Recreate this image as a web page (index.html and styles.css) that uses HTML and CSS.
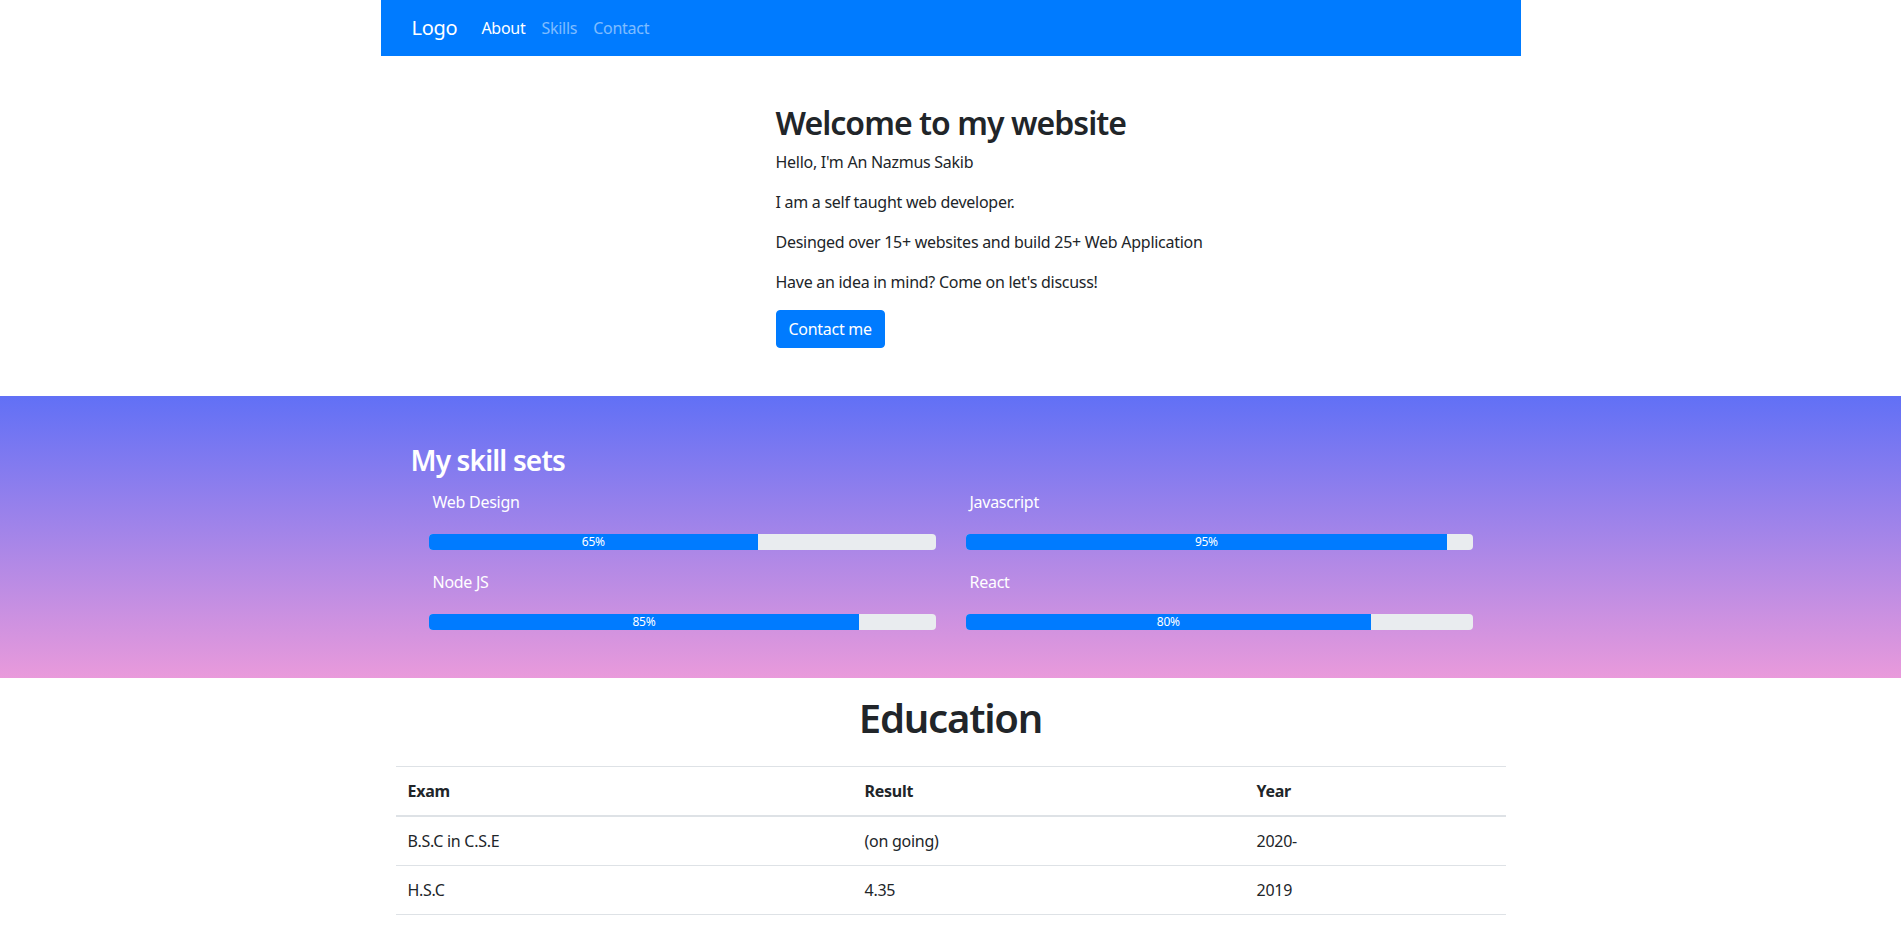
FILE: index.html
```html
<!DOCTYPE html>
<html lang="en">
<head>
<meta charset="utf-8">
<title>My website</title>
<link rel="stylesheet" href="styles.css">
</head>
<body>
<nav class="navbar">
  <a class="brand" href="#">Logo</a>
  <ul class="nav-links">
    <li><a class="nav-link active" href="#">About</a></li>
    <li><a class="nav-link" href="#">Skills</a></li>
    <li><a class="nav-link" href="#">Contact</a></li>
  </ul>
</nav>

<section class="hero">
  <div class="hero-row">
    <div class="hero-text">
      <h2 class="hero-title">Welcome to my website</h2>
      <p>Hello, I'm An Nazmus Sakib</p>
      <p>I am a self taught web developer.</p>
      <p>Desinged over 15+ websites and build 25+ Web Application</p>
      <p>Have an idea in mind? Come on let's discuss!</p>
      <a class="btn" href="#">Contact me</a>
    </div>
  </div>
</section>

<section class="skills">
  <div class="skills-inner">
    <h3 class="skills-title">My skill sets</h3>
    <div class="skills-grid">
      <div class="skill">
        <div class="skill-label">Web Design</div>
        <div class="progress"><div class="progress-bar" style="width:65%">65%</div></div>
      </div>
      <div class="skill">
        <div class="skill-label">Javascript</div>
        <div class="progress"><div class="progress-bar" style="width:95%">95%</div></div>
      </div>
      <div class="skill">
        <div class="skill-label">Node JS</div>
        <div class="progress"><div class="progress-bar" style="width:85%">85%</div></div>
      </div>
      <div class="skill">
        <div class="skill-label">React</div>
        <div class="progress"><div class="progress-bar" style="width:80%">80%</div></div>
      </div>
    </div>
  </div>
</section>

<section class="education">
  <h1 class="edu-title">Education</h1>
  <table class="table">
    <thead>
      <tr><th class="col-exam">Exam</th><th class="col-result">Result</th><th>Year</th></tr>
    </thead>
    <tbody>
      <tr><td>B.S.C in C.S.E</td><td>(on going)</td><td>2020-</td></tr>
      <tr><td>H.S.C</td><td>4.35</td><td>2019</td></tr>
    </tbody>
  </table>
</section>
</body>
</html>
```

FILE: styles.css
```css
* { box-sizing: border-box; }
html, body { margin: 0; padding: 0; }
body {
  font-family: "Noto Sans", "Open Sans", sans-serif;
  font-size: 16px;
  line-height: 1.5;
  letter-spacing: -0.017em;
  color: #212529;
  background: #fff;
}
h1, h2, h3 { margin: 0 0 8px; font-weight: 600; line-height: 1.2; letter-spacing: -0.03em; }
p { margin: 0 0 16px; }
a { text-decoration: none; }

.navbar {
  width: 1140px;
  margin: 0 auto;
  background: #007bff;
  padding: 8px 31px;
  display: flex;
  align-items: center;
}
.brand {
  color: #fff;
  font-size: 20px;
  line-height: 30px;
  padding: 5px 0;
  margin-right: 16px;
}
.nav-links { display: flex; list-style: none; margin: 0; padding: 0; }
.nav-link {
  display: block;
  padding: 8px;
  color: rgba(255,255,255,.5);
}
.nav-link.active { color: #fff; }

.hero {
  width: 1140px;
  margin: 0 auto;
  padding: 48px 15px;
}
.hero-row {
  display: grid;
  grid-template-columns: repeat(12, 1fr);
  column-gap: 30px;
}
.hero-text { grid-column: 5 / span 6; }
.hero-title { font-size: 32px; }
.btn {
  display: inline-block;
  background: #007bff;
  color: #fff;
  border: 1px solid #007bff;
  border-radius: 4px;
  padding: 6px 12px;
  font-size: 16px;
  line-height: 24px;
}

.skills {
  background: linear-gradient(to bottom, #6170f6, #e99adb);
  color: #fff;
}
.skills-inner {
  width: 1140px;
  margin: 0 auto;
  padding: 48px 30px;
}
.skills-title { font-size: 28px; }
.skills-grid {
  display: grid;
  grid-template-columns: 1fr 1fr;
  column-gap: 30px;
  row-gap: 16px;
  padding: 0 18px;
}
.skill-label { padding: 4px; margin-bottom: 16px; }
.progress {
  height: 16px;
  display: flex;
  background: #e9ecef;
  border-radius: 4px;
  overflow: hidden;
  font-size: 12px;
  line-height: 16px;
}
.progress-bar {
  background: #007bff;
  color: #fff;
  text-align: center;
}

.education {
  width: 1140px;
  margin: 0 auto;
  padding: 16px 15px 0;
}
.edu-title {
  font-size: 40px;
  text-align: center;
  margin-bottom: 24px;
}
.table {
  width: 100%;
  border-collapse: collapse;
  margin-bottom: 16px;
}
.table th, .table td {
  padding: 12px;
  text-align: left;
  vertical-align: top;
  border-top: 1px solid #dee2e6;
  line-height: 24px;
}
.table th { font-weight: 700; }
.table thead th { border-bottom: 2px solid #dee2e6; }
.table tbody tr:last-child td { border-bottom: 1px solid #dee2e6; }
.col-exam { width: 457px; }
.col-result { width: 392px; }
```
